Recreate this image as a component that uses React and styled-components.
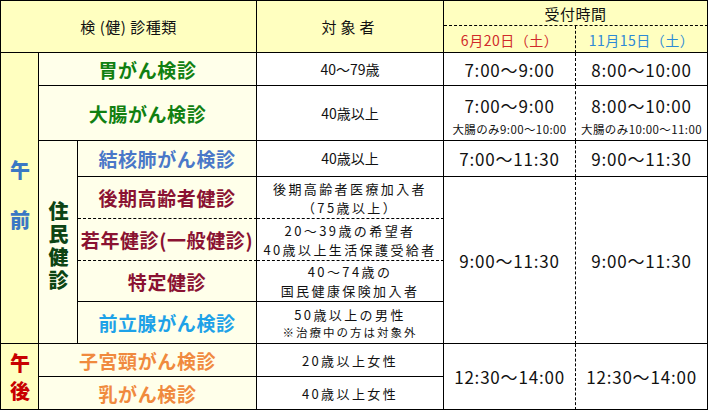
import styled, {createGlobalStyle} from "styled-components";

const GlobalStyle = createGlobalStyle`
    * {
        box-sizing: border-box;
    }
    body {
        margin: 0;
        background: #ffffff;
        font-family: "Noto Sans CJK JP", "Noto Sans", sans-serif;
    }
`;

const color = {
    headBg: "#ffffc0",
    creamBg: "#ffffea",
    green: "#118011",
    blue: "#4a78c8",
    maroon: "#8a1232",
    sky: "#1ea2e8",
    orange: "#f08a3e",
    amBlue: "#3a78c4",
    pmRed: "#c80000",
    groupGreen: "#0c4414",
    dateRed: "#d02a2a",
    dateBlue: "#2e8ad6",
};

const line = (dotted) => (dotted ? "1px dashed #000" : "1px solid #000");

const Table = styled.table`
    border-collapse: separate;
    border-spacing: 0;
    table-layout: fixed;
    width: 708px;
    border-top: 1px solid #000;
    border-left: 1px solid #000;
`;

const Row = styled.tr`
    height: ${({h}) => h}px;
`;

const Cell = styled.td`
    padding: 0;
    text-align: center;
    vertical-align: middle;
    font-weight: 400;
    border-right: ${({dotRight}) => line(dotRight)};
    border-bottom: ${({dotBottom}) => line(dotBottom)};
`;

const HeadCell = styled(Cell)`
    background: ${color.headBg};
    font-size: 15px;
    color: #111;
    letter-spacing: ${({spaced}) => (spaced ? "4px" : "0.5px")};
`;

const DateCell = styled(HeadCell)`
    color: ${({tone}) => tone};
    font-size: 14px;
    letter-spacing: 0.5px;
    padding-top: 2px;
`;

const PeriodCell = styled(Cell)`
    background: ${({bg}) => bg || color.headBg};
    color: ${({tone}) => tone};
    font-weight: 900;
`;

const Vertical = styled.div`
    margin: 0 auto;
    writing-mode: vertical-rl;
    text-orientation: upright;
    font-size: 20px;
    line-height: 24px;
    letter-spacing: ${({gap}) => gap}px;
    padding-top: ${({gap, lift = 0}) => gap - lift}px;
`;

const KindCell = styled(Cell)`
    background: ${color.creamBg};
    color: ${({tone}) => tone};
    font-size: 19px;
    font-weight: 700;
    letter-spacing: 0.6px;
    white-space: nowrap;
`;

const TargetCell = styled(Cell)`
    font-size: ${({wide}) => (wide ? "13px" : "14px")};
    line-height: 19px;
    color: #111;
    letter-spacing: ${({wide}) => (wide ? "2.4px" : "0")};
`;

const Note = styled.div`
    font-size: 11.5px;
    line-height: 17px;
    letter-spacing: 2px;
`;

const TimeCell = styled(Cell)`
    font-size: 17px;
    color: #111;
    letter-spacing: 0.8px;
    white-space: nowrap;
`;

const TimeStack = styled.div`
    display: flex;
    flex-direction: column;
    align-items: center;
    gap: 4px;
    padding-top: 2px;
`;

const SmallTime = styled.div`
    font-size: 11.5px;
    letter-spacing: 0.4px;
    line-height: 14px;
`;

export default function App() {
    return (
        <>
            <GlobalStyle/>
            <Table>
                <colgroup>
                    <col style={{width: 38}}/>
                    <col style={{width: 39}}/>
                    <col style={{width: 179}}/>
                    <col style={{width: 187}}/>
                    <col style={{width: 132}}/>
                    <col style={{width: 132}}/>
                </colgroup>
                <tbody>
                    <Row h={25}>
                        <HeadCell as="th" colSpan={3} rowSpan={2}>検 (健) 診種類</HeadCell>
                        <HeadCell as="th" rowSpan={2} spaced>対象者</HeadCell>
                        <HeadCell as="th" colSpan={2} dotBottom>受付時間</HeadCell>
                    </Row>
                    <Row h={27}>
                        <DateCell as="th" tone={color.dateRed} dotRight>6月20日（土）</DateCell>
                        <DateCell as="th" tone={color.dateBlue}>11月15日（土）</DateCell>
                    </Row>

                    <Row h={33}>
                        <PeriodCell rowSpan={7} tone={color.amBlue}>
                            <Vertical gap={30} lift={6}>午前</Vertical>
                        </PeriodCell>
                        <KindCell colSpan={2} tone={color.green}>胃がん検診</KindCell>
                        <TargetCell>40～79歳</TargetCell>
                        <TimeCell dotRight>7:00～9:00</TimeCell>
                        <TimeCell>8:00～10:00</TimeCell>
                    </Row>
                    <Row h={55}>
                        <KindCell colSpan={2} tone={color.green}>大腸がん検診</KindCell>
                        <TargetCell>40歳以上</TargetCell>
                        <TimeCell dotRight>
                            <TimeStack>
                                <span>7:00～9:00</span>
                                <SmallTime>大腸のみ9:00～10:00</SmallTime>
                            </TimeStack>
                        </TimeCell>
                        <TimeCell>
                            <TimeStack>
                                <span>8:00～10:00</span>
                                <SmallTime>大腸のみ10:00～11:00</SmallTime>
                            </TimeStack>
                        </TimeCell>
                    </Row>
                    <Row h={36}>
                        <PeriodCell rowSpan={5} bg={color.creamBg} tone={color.groupGreen}>
                            <Vertical gap={3} lift={-6}>住民健診</Vertical>
                        </PeriodCell>
                        <KindCell tone={color.blue}>結核肺がん検診</KindCell>
                        <TargetCell>40歳以上</TargetCell>
                        <TimeCell dotRight>7:00～11:30</TimeCell>
                        <TimeCell>9:00～11:30</TimeCell>
                    </Row>
                    <Row h={42}>
                        <KindCell tone={color.maroon} dotBottom>後期高齢者健診</KindCell>
                        <TargetCell wide dotBottom>後期高齢者医療加入者<br/>（75歳以上）</TargetCell>
                        <TimeCell rowSpan={4} dotRight>9:00～11:30</TimeCell>
                        <TimeCell rowSpan={4}>9:00～11:30</TimeCell>
                    </Row>
                    <Row h={42}>
                        <KindCell tone={color.maroon} dotBottom>若年健診(一般健診)</KindCell>
                        <TargetCell wide dotBottom>20～39歳の希望者<br/>40歳以上生活保護受給者</TargetCell>
                    </Row>
                    <Row h={41}>
                        <KindCell tone={color.maroon}>特定健診</KindCell>
                        <TargetCell wide>40～74歳の<br/>国民健康保険加入者</TargetCell>
                    </Row>
                    <Row h={42}>
                        <KindCell tone={color.sky}>前立腺がん検診</KindCell>
                        <TargetCell wide>
                            50歳以上の男性
                            <Note>※治療中の方は対象外</Note>
                        </TargetCell>
                    </Row>

                    <Row h={33}>
                        <PeriodCell rowSpan={2} tone={color.pmRed}>
                            <Vertical gap={8}>午後</Vertical>
                        </PeriodCell>
                        <KindCell colSpan={2} tone={color.orange}>子宮頸がん検診</KindCell>
                        <TargetCell wide>20歳以上女性</TargetCell>
                        <TimeCell rowSpan={2} dotRight>12:30～14:00</TimeCell>
                        <TimeCell rowSpan={2}>12:30～14:00</TimeCell>
                    </Row>
                    <Row h={33}>
                        <KindCell colSpan={2} tone={color.orange}>乳がん検診</KindCell>
                        <TargetCell wide>40歳以上女性</TargetCell>
                    </Row>
                </tbody>
            </Table>
        </>
    );
}
